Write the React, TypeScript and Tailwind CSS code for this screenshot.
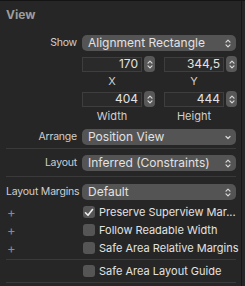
import React from 'react';

const font = { fontFamily: 'Inter, "Liberation Sans", sans-serif' };

function UpDown() {
  return (
    <svg width="6" height="9" viewBox="0 0 6 9" fill="none" stroke="#d8d8d8" strokeWidth="1.2" strokeLinecap="round" strokeLinejoin="round">
      <path d="M1 3.2 L3 1.2 L5 3.2" />
      <path d="M1 5.8 L3 7.8 L5 5.8" />
    </svg>
  );
}

function Down() {
  return (
    <svg width="6" height="5" viewBox="0 0 6 5" fill="none" stroke="#d8d8d8" strokeWidth="1.2" strokeLinecap="round" strokeLinejoin="round">
      <path d="M1 1.5 L3 3.5 L5 1.5" />
    </svg>
  );
}

function Popup({ text, single }: { text: string; single?: boolean }) {
  return (
    <div className="flex h-[16px] w-[154px] items-center justify-between rounded-[5px] bg-[#545454] pl-[6px] pr-[5px] text-[12px] text-[#e2e2e2]">
      <span className="leading-none">{text}</span>
      {single ? <Down /> : <UpDown />}
    </div>
  );
}

function NumField({ value, label }: { value: string; label: string }) {
  return (
    <div className="flex flex-col">
      <div className="flex items-center gap-[2px]">
        <div className="flex h-[15px] w-[60px] items-center justify-end border border-[#3e3e3e] bg-[#2a2a2a] pr-[3px] text-[12px] leading-none text-[#e2e2e2]">
          {value}
        </div>
        <div className="flex h-[16px] w-[11px] shrink-0 items-center justify-center rounded-[4px] bg-[#585858]">
          <UpDown />
        </div>
      </div>
      <div className="mt-[3px] w-[60px] text-center text-[11px] leading-[12px] text-[#d0d0d0]">{label}</div>
    </div>
  );
}

function Row({ label, children, className }: { label: string; children: React.ReactNode; className?: string }) {
  return (
    <div className={`flex items-center ${className ?? ''}`}>
      <div className="w-[71px] shrink-0 whitespace-nowrap text-right text-[10.5px] leading-none tracking-[-0.2px] text-[#cfcfcf]">{label}</div>
      <div className="ml-[5px] shrink-0">{children}</div>
    </div>
  );
}

function Check({ label, checked, plus }: { label: string; checked?: boolean; plus?: boolean }) {
  return (
    <div className="flex h-[18px] items-center">
      <div className="w-[77px] shrink-0 pl-[1px] text-[13px] leading-none text-[#8a8a8a]">{plus ? '+' : ''}</div>
      <div className="flex h-[12px] w-[12px] shrink-0 items-center justify-center rounded-[3px] bg-[#555555]">
        {checked && (
          <svg width="10" height="9" viewBox="0 0 10 9" fill="none" stroke="#f0f0f0" strokeWidth="1.6" strokeLinecap="round" strokeLinejoin="round">
            <path d="M1.5 4.8 L4 7.3 L8.5 1.5" />
          </svg>
        )}
      </div>
      <span className="ml-[4px] whitespace-nowrap text-[11px] leading-none text-[#e2e2e2]">{label}</span>
    </div>
  );
}

export default function App() {
  return (
    <div className="flex h-[286px] w-[245px] overflow-hidden border-t border-[#141414] bg-[#262626]" style={font}>
      <div className="w-[241px] shrink-0 pl-[6px] pr-[5px]">
        <div className="pt-[7px] text-[12px] font-bold leading-[14px] text-[#9c9c9c]">View</div>

        <Row label="Show" className="mt-[13px]">
          <Popup text="Alignment Rectangle" />
        </Row>

        <div className="ml-[76px] mt-[5px] flex gap-[9px]">
          <NumField value="170" label="X" />
          <NumField value="344,5" label="Y" />
        </div>
        <div className="ml-[76px] mt-[4px] flex gap-[9px]">
          <NumField value="404" label="Width" />
          <NumField value="444" label="Height" />
        </div>

        <Row label="Arrange" className="mt-[7px]">
          <Popup text="Position View" single />
        </Row>
        <div className="mt-[3px] h-px bg-[#3a3a3a]" />

        <Row label="Layout" className="mt-[6px]">
          <Popup text="Inferred (Constraints)" />
        </Row>
        <div className="mt-[5px] h-px bg-[#3a3a3a]" />

        <Row label="Layout Margins" className="mt-[7px]">
          <Popup text="Default" />
        </Row>

        <div className="mt-[3px] flex flex-col">
          <Check label="Preserve Superview Mar..." checked plus />
          <Check label="Follow Readable Width" plus />
          <Check label="Safe Area Relative Margins" plus />
        </div>
        <div className="mt-[2px] h-px bg-[#3a3a3a]" />
        <div className="mt-[2px]">
          <Check label="Safe Area Layout Guide" />
        </div>
        <div className="mt-[2px] h-px bg-[#3a3a3a]" />
      </div>
      <div className="w-px shrink-0 bg-[#161616]" />
      <div className="flex-1 bg-[#262626]" />
    </div>
  );
}
